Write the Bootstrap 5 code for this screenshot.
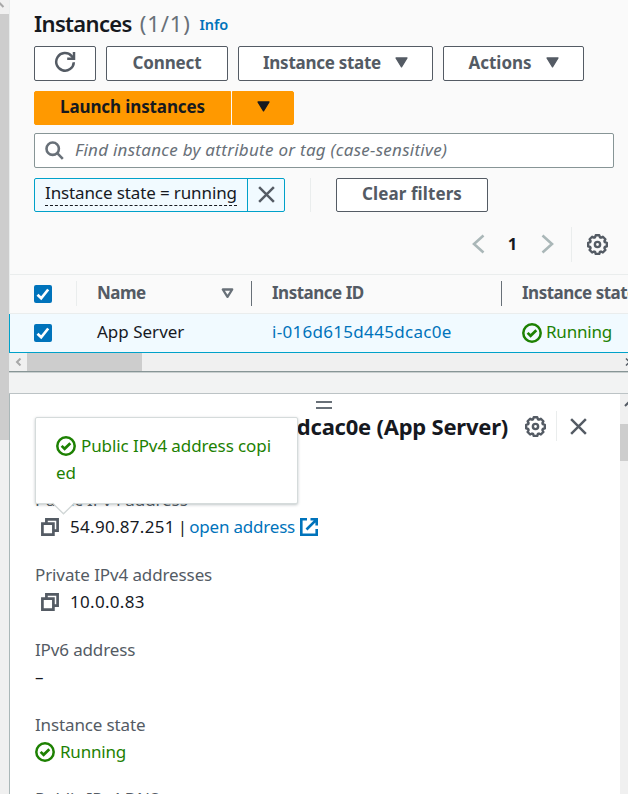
<!DOCTYPE html>
<html lang="en">
<head>
<meta charset="utf-8">
<title>Instances | EC2</title>
<link href="https://cdn.jsdelivr.net/npm/bootstrap@5.3.0/dist/css/bootstrap.min.css" rel="stylesheet">
<style>
html,body{height:794px;overflow:hidden}
body{font-family:"Noto Sans","Open Sans",sans-serif;font-size:17px;line-height:27.5px;color:#16191f;background:#fff}
.app{width:628px;height:794px}
.page-scroll{width:9px;background:#f0f0f0}
.page-scroll .arrow{height:14px;overflow:hidden}
.page-scroll .thumb{height:426px;background:#cdcdcd}
.page-main{width:619px}
.list-panel{height:371px;background:#fafafa;border-left:1px solid #eaeded}
.tools{padding:7px 14px 0 24px}
h1,h2{font-size:22px;line-height:30px;font-weight:700;margin:0;color:#16191f}
h1{letter-spacing:-.65px;font-weight:600}
.count{font-size:22px;line-height:30px;color:#687078;letter-spacing:.85px;margin-left:8px}
.info{font-size:14.5px;font-weight:600;color:#0073bb;letter-spacing:-.1px;margin-left:9px;text-decoration:none;padding-top:4px}
.aws-btn{height:35px;border:1px solid #545b64;border-radius:2px;background:#fff;color:#545b64;font-size:17px;font-weight:700;line-height:1;padding:0 0 2px;display:flex;align-items:center;justify-content:center}
.btn-row{margin-top:7px;gap:10px;height:35px}
.w-refresh{width:62px}.w-connect{width:122px}.w-state{width:195px;gap:14px}.w-actions{width:141px;gap:14px}
.w-launch{width:197px}.w-drop{width:62px}.w-clear{width:152px;margin-left:25px}
.orange{background:#f90;border-color:#f90;color:#16191f;height:34px}
.w-launch{border-radius:2px 0 0 2px}.w-drop{border-radius:0 2px 2px 0}
.launch-row{gap:1px;margin-top:10px}
.search{height:35px;margin-top:8px;border:1px solid #879596;border-radius:2px;background:#fff;color:#687078;font-style:italic;letter-spacing:.27px;padding-left:10px;gap:11px}
.filters{margin-top:10px;height:34px}
.token{width:251px;border:1px solid #00a1c9;border-radius:2px;background:#f1faff}
.token .txt{width:213px;padding-left:10px;border-right:1px solid #00a1c9;letter-spacing:-.12px}
.token .txt span{line-height:28px;height:27px;border-bottom:1px dashed #16191f}
.vline{width:1px;background:#eaeded}
.filters .vline{margin-left:25px}
.pager{height:35px;margin-top:15px;padding-right:20px}
.pager b{font-size:16.5px;width:33px;text-align:center;margin-left:11px;margin-right:12px}
.pager .vline{margin:0 15px 0 17px}
.grid-row{display:grid;grid-template-columns:67px 175px 250px 300px;width:619px;overflow:hidden;align-items:center}
.grid-head{margin-top:12px;height:40px;border-top:1px solid #eaeded;border-bottom:1px solid #eaeded;color:#545b64;font-weight:700}
.grid-head .cell{height:25px;padding-left:20px}
.grid-head .cell>span{padding-bottom:1px}
.sort{margin-right:17px}
.dark-end{border-right:1px solid #687078}.light-end{border-right:1px solid #eaeded}
.grid-body{height:39px;margin-left:-1px;border-left:1px solid #00a1c9;border-bottom:1px solid #00a1c9;background:#f1faff}
.grid-body .cell{padding-left:20px;padding-bottom:2px}
.grid-body .cell svg{margin-top:2px}
.cell.check,.grid-head .cell.check{padding-left:24px;padding-bottom:0}
.grid-body .cell.check svg{margin-top:0}
.blue{color:#0073bb;text-decoration:none}.green{color:#1d8102}
.h-scroll{height:18px;background:#f0f0f0}
.h-scroll .arrow{width:17px}
.h-scroll .thumb{width:115px;background:#cdcdcd}
.splitter{height:23px;background:#f2f3f3;border-top:1px solid #879596;border-bottom:1px solid #bcc3c5;box-shadow:inset 0 1px 0 #c9cfcf}
.details{height:400px;border-left:1px solid #aab7b8;background:#fff;overflow:hidden}
.details-body{padding-left:25px;width:610px}
.v-scroll{width:8px;background:#f0f0f0;overflow:hidden}
.v-scroll .arrow{height:30px}.v-scroll .thumb{height:37px;background:#cdcdcd}
.handle{width:16px;height:8px;border-top:2px solid #687078;border-bottom:2px solid #687078;margin:7px 0 0 281px}
.title-row{margin-top:2px;height:30px;margin-right:31px}
.title-row .vline{margin:0 13px 0 10px}
h2{width:474px;letter-spacing:-.23px;text-align:right;white-space:nowrap;margin-right:16px;padding-right:1px}
.props{padding-top:45px}
.prop{height:75px}
.prop .lbl{color:#545b64;white-space:nowrap}
.prop .val{white-space:nowrap;margin-top:-1px}
.prop .val svg{margin-top:2px}
.prop:last-child{margin-top:-1px}
.bar{margin:0 2px 0 3px}
.copy{margin-left:6px;margin-right:11px}
.status{gap:5px}
.toast-tip{left:35px;top:417px;width:263px;height:87px;background:#fff;border:1px solid #d5dbdb;border-radius:2px;box-shadow:0 1px 3px rgba(0,28,36,.25);padding:14px 20px 0;line-height:27px;z-index:5}
.toast-tip .tail{left:16px;top:84px}
.l1{letter-spacing:-.14px}.l2{letter-spacing:-.27px}.l3{letter-spacing:-.03px}.l4{letter-spacing:-.11px}.l5{letter-spacing:.1px}
.l6{letter-spacing:-.5px}.l7{letter-spacing:-.5px}.l8{letter-spacing:.3px}.l9{letter-spacing:-.2px}.l10{letter-spacing:-.09px}
svg{flex:none;display:block}
</style>
<script src="https://cdn.jsdelivr.net/npm/bootstrap@5.3.0/dist/js/bootstrap.bundle.min.js"></script>
</head>
<body>
<svg width="0" height="0" class="position-absolute">
<defs>
<symbol id="ok" viewBox="0 0 20 20"><circle cx="10" cy="10" r="8.7" fill="none" stroke="#1d8102" stroke-width="2.5"/><path d="M5.6 9.9l3 2.9 5.7-5.6" fill="none" stroke="#1d8102" stroke-width="2.7"/></symbol>
<symbol id="gear" viewBox="0 0 20 20"><path d="M8.3 1.2h3.4l.6 1.9 1 .4 1.8-.9 2.4 2.4-.9 1.8.4 1 1.9.6v3.4l-1.9.6-.4 1 .9 1.8-2.4 2.4-1.8-.9-1 .4-.6 1.9H8.3l-.6-1.9-1-.4-1.8.9-2.4-2.4.9-1.8-.4-1-1.9-.6V8.4l1.9-.6.4-1-.9-1.8 2.4-2.4 1.8.9 1-.4z" fill="none" stroke="#545b64" stroke-width="2.3" stroke-linejoin="round"/><circle cx="10" cy="10" r="2.5" fill="none" stroke="#545b64" stroke-width="2.3"/></symbol>
<symbol id="close" viewBox="0 0 18 18"><path d="M1.2 1.2l15.6 15.6M16.8 1.2L1.2 16.8" stroke="#545b64" stroke-width="2.6"/></symbol>
<symbol id="down" viewBox="0 0 13 11"><path d="M1 1h11L6.5 9.9z" fill="currentColor" stroke="currentColor" stroke-width="1.3" stroke-linejoin="round"/></symbol>
<symbol id="tick" viewBox="0 0 18 18"><rect width="18" height="18" rx="2" fill="#0073bb"/><path d="M3.5 9.7l3.7 3.6 7-8.8" fill="none" stroke="#fff" stroke-width="2.7"/></symbol>
<symbol id="dup" viewBox="0 0 18 18"><path d="M1.4 5.6h11v11h-11zM5.4 5V1.4h11.2v11.2H13" fill="none" stroke="#545b64" stroke-width="2.7"/></symbol>
</defs>
</svg>
<div class="app d-flex position-relative overflow-hidden">
  <div class="page-scroll flex-shrink-0">
    <div class="arrow"><svg width="9" height="14"><path d="M-1 2.500L3.500 7" stroke="#a8a8a8" stroke-width="2" fill="none"/></svg></div>
    <div class="thumb"></div>
  </div>
  <div class="page-main flex-shrink-0">
    <section class="list-panel">
      <div class="tools">
        <div class="d-flex align-items-center"><h1>Instances</h1><span class="count">(1/1)</span><a class="info" href="#">Info</a></div>
        <div class="btn-row d-flex">
          <button class="aws-btn w-refresh" aria-label="Refresh"><svg width="22" height="22" viewBox="0 0 22 22" fill="none" stroke="#545b64" stroke-width="2.5"><path d="M19.800 11.200a8.800 8.800 0 1 1-2.300-6.300l1.900 2.200"/><path d="M20 1v6.800h-6.800"/></svg></button>
          <button class="aws-btn w-connect l1">Connect</button>
          <button class="aws-btn w-state l2">Instance state <svg width="13" height="11"><use href="#down"/></svg></button>
          <button class="aws-btn w-actions l3">Actions <svg width="13" height="11"><use href="#down"/></svg></button>
        </div>
        <div class="launch-row d-flex">
          <button class="aws-btn orange w-launch l4">Launch instances</button>
          <button class="aws-btn orange w-drop" aria-label="More"><svg width="13" height="11"><use href="#down"/></svg></button>
        </div>
        <div class="search d-flex align-items-center"><svg width="19" height="19" viewBox="0 0 19 19" fill="none" stroke="#687078" stroke-width="2.6"><circle cx="7.7" cy="7.7" r="6.2"/><path d="M12.200 12.200l5.600 5.600"/></svg><span>Find instance by attribute or tag (case-sensitive)</span></div>
        <div class="filters d-flex">
          <div class="token d-flex"><div class="txt"><span class="d-inline-block">Instance state = running</span></div><div class="flex-fill d-flex align-items-center justify-content-center"><svg width="17" height="17"><use href="#close"/></svg></div></div>
          <div class="vline"></div>
          <button class="aws-btn w-clear l5 h-100">Clear filters</button>
        </div>
      </div>
      <div class="pager d-flex align-items-center justify-content-end">
        <svg width="13" height="20" viewBox="0 0 13 20" fill="none" stroke="#aab7b8" stroke-width="2.6"><path d="M11.500 1.500L2 10l9.500 8.500"/></svg>
        <b>1</b>
        <svg width="13" height="20" viewBox="0 0 13 20" fill="none" stroke="#aab7b8" stroke-width="2.6"><path d="M1.500 1.500L11 10l-9.500 8.500"/></svg>
        <div class="vline h-100"></div>
        <svg width="21" height="21"><use href="#gear"/></svg>
      </div>
      <div class="grid-row grid-head">
        <div class="cell check light-end d-flex align-items-center"><svg width="18" height="18"><use href="#tick"/></svg></div>
        <div class="cell dark-end d-flex align-items-center justify-content-between"><span class="l6">Name</span><svg class="sort" width="13" height="11" viewBox="0 0 13 11"><path d="M1.800 1.500h9.400L6.500 8.900z" fill="none" stroke="#687078" stroke-width="2.3" stroke-linejoin="round"/></svg></div>
        <div class="cell dark-end d-flex align-items-center l7"><span>Instance ID</span></div>
        <div class="cell d-flex align-items-center l6"><span>Instance state</span></div>
      </div>
      <div class="grid-row grid-body">
        <div class="cell check"><svg width="18" height="18"><use href="#tick"/></svg></div>
        <div class="cell">App Server</div>
        <div class="cell"><a class="blue l8" href="#">i-016d615d445dcac0e</a></div>
        <div class="cell green d-flex align-items-center l9"><svg class="me-1" width="20" height="20"><use href="#ok"/></svg>Running</div>
      </div>
      <div class="h-scroll d-flex">
        <div class="arrow d-flex align-items-center justify-content-center"><svg width="7" height="8" viewBox="0 0 7 8"><path d="M5.500.5L2 4l3.500 3.500" fill="none" stroke="#a8a8a8" stroke-width="2"/></svg></div>
        <div class="thumb"></div>
        <div class="ms-auto d-flex align-items-center"><svg width="3" height="8" viewBox="0 0 3 8"><path d="M1 .5L4.500 4 1 7.500" fill="none" stroke="#545b64" stroke-width="1.5"/></svg></div>
      </div>
    </section>
    <div class="splitter"></div>
    <section class="details d-flex">
      <div class="details-body flex-shrink-0">
        <div class="handle"></div>
        <div class="title-row d-flex align-items-center">
          <h2>dcac0e (App Server)</h2>
          <svg width="21" height="21"><use href="#gear"/></svg>
          <div class="vline h-100"></div>
          <svg width="17" height="17"><use href="#close"/></svg>
        </div>
        <div class="props">
          <div class="prop"><div class="lbl l10">Public IPv4 address</div><div class="val d-flex align-items-center"><svg class="copy" width="18" height="18"><use href="#dup"/></svg><span class="l8">54.90.87.251</span><span class="bar">|</span><a class="blue l9" href="#">open address</a><svg class="ms-1" width="20" height="20" viewBox="0 0 20 20" fill="none" stroke="#0073bb" stroke-width="2.6"><path d="M8 2.300H2.300v15.400h15.400V12M11.500 2.300h6.200v6.200M17.700 2.300L7.500 12.500"/></svg></div></div>
          <div class="prop"><div class="lbl l4">Private IPv4 addresses</div><div class="val d-flex align-items-center"><svg class="copy" width="18" height="18"><use href="#dup"/></svg><span class="l8">10.0.0.83</span></div></div>
          <div class="prop"><div class="lbl l1">IPv6 address</div><div class="val">–</div></div>
          <div class="prop"><div class="lbl l1">Instance state</div><div class="val status green d-flex align-items-center l9"><svg width="20" height="20"><use href="#ok"/></svg>Running</div></div>
          <div class="prop"><div class="lbl l1">Public IPv4 DNS</div></div>
        </div>
      </div>
      <div class="v-scroll"><div class="arrow"><svg width="8" height="14"><path d="M5 12L9 8" stroke="#545b64" stroke-width="2"/></svg></div><div class="thumb"></div></div>
    </section>
  </div>
  <div class="toast-tip position-absolute green l10">
    <div class="status d-flex align-items-center"><svg width="20" height="20"><use href="#ok"/></svg>Public IPv4 address copi</div>
    <div>ed</div>
    <svg class="tail position-absolute" width="23" height="13" viewBox="0 0 23 13"><path d="M0 0l11.500 11.500L23 0z" fill="#fff"/><path d="M.5 1l11 10.800L22.500 1" fill="none" stroke="#d0d6d6" stroke-width="1.3"/></svg>
  </div>
</div>
</body>
</html>
